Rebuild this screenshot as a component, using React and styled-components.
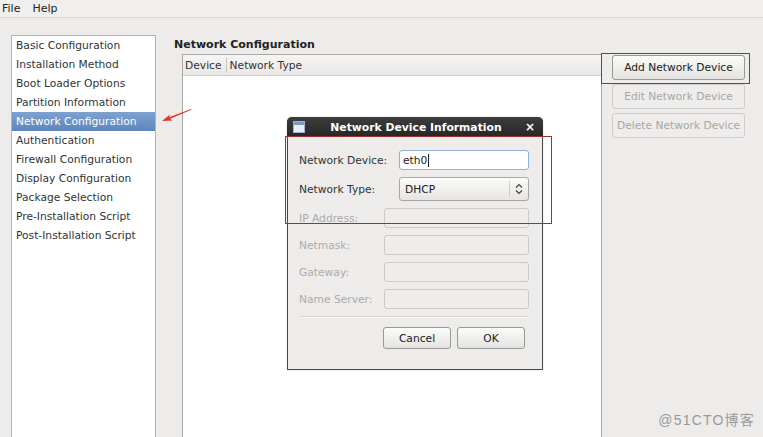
import React from "react";
import styled, { createGlobalStyle } from "styled-components";

const GlobalStyle = createGlobalStyle`
  html, body {
    margin: 0;
    padding: 0;
    background: #edeceb;
  }
  * {
    box-sizing: border-box;
  }
`;

const sections = [
  "Basic Configuration",
  "Installation Method",
  "Boot Loader Options",
  "Partition Information",
  "Network Configuration",
  "Authentication",
  "Firewall Configuration",
  "Display Configuration",
  "Package Selection",
  "Pre-Installation Script",
  "Post-Installation Script",
];

const fields = [
  { label: "IP Address:" },
  { label: "Netmask:" },
  { label: "Gateway:" },
  { label: "Name Server:" },
];

function App() {
  return (
    <>
      <GlobalStyle />
      <Window>
        <MenuBar>
          <MenuItem>File</MenuItem>
          <MenuItem>Help</MenuItem>
        </MenuBar>

        <Main>
          <SideList>
            {sections.map((s) => (
              <ListRow key={s} $active={s === "Network Configuration"}>
                {s}
              </ListRow>
            ))}
          </SideList>

          <Content>
            <Title>Network Configuration</Title>
            <TableArea>
              <Table>
                <TableHeader>
                  <HeaderCell>Device</HeaderCell>
                  <HeaderCell $last>Network Type</HeaderCell>
                </TableHeader>
              </Table>
              <ButtonColumn>
                <SideButton>Add Network Device</SideButton>
                <SideButton disabled>Edit Network Device</SideButton>
                <SideButton disabled>Delete Network Device</SideButton>
              </ButtonColumn>
            </TableArea>
          </Content>
        </Main>

        <Dialog>
          <TitleBar>
            <WindowIcon width="12" height="12" viewBox="0 0 12 12">
              <rect x="0.5" y="0.5" width="11" height="11" fill="#e8eef6" stroke="#9fb3cc" />
              <rect x="1" y="1" width="10" height="3" fill="#7b9bc6" />
            </WindowIcon>
            <DialogTitle>Network Device Information</DialogTitle>
            <CloseMark>×</CloseMark>
          </TitleBar>
          <DialogBody>
            <FormRow>
              <FieldLabel $width={100}>Network Device:</FieldLabel>
              <TextInput $focused>
                eth0<Caret />
              </TextInput>
            </FormRow>
            <FormRow>
              <FieldLabel $width={100}>Network Type:</FieldLabel>
              <SelectBox>
                <SelectValue>DHCP</SelectValue>
                <SelectArrows>
                  <svg width="8" height="12" viewBox="0 0 8 12">
                    <path d="M1 4.5 L4 1.5 L7 4.5 M1 7.5 L4 10.5 L7 7.5" fill="none" stroke="#444" strokeWidth="1.2" />
                  </svg>
                </SelectArrows>
              </SelectBox>
            </FormRow>
            {fields.map((f) => (
              <FormRow key={f.label}>
                <FieldLabel $width={85} $disabled>
                  {f.label}
                </FieldLabel>
                <TextInput $disabled />
              </FormRow>
            ))}
            <Separator />
            <DialogButtons>
              <DialogButton>Cancel</DialogButton>
              <DialogButton>OK</DialogButton>
            </DialogButtons>
          </DialogBody>
        </Dialog>

        <Highlight style={{ left: 601, top: 53, width: 149, height: 31 }} />
        <Highlight style={{ left: 285, top: 136, width: 267, height: 88 }} />

        <Arrow width="32" height="16" viewBox="0 0 32 16">
          <path d="M1 13 L9 6.5 L8.2 9.3 L30 1 L30.4 1.8 L9.2 10.8 L11.5 12.5 Z" fill="#e8322b" />
        </Arrow>

        <Watermark>@51CTO博客</Watermark>
      </Window>
    </>
  );
}

export default App;

const Window = styled.div`
  position: relative;
  width: 763px;
  height: 437px;
  overflow: hidden;
  background: #edeceb;
  font-family: "DejaVu Sans", "Noto Sans", sans-serif;
  font-size: 10.7px;
  color: #2e3436;
`;

const MenuBar = styled.div`
  display: flex;
  height: 18px;
  align-items: center;
  padding-left: 2px;
  gap: 12px;
  background: #f0efee;
  border-bottom: 1px solid #dcdad8;
`;

const MenuItem = styled.span`
  font-size: 11px;
  color: #222;
`;

const Main = styled.div`
  display: flex;
  padding: 17px 0 0 11px;
  height: 419px;
`;

const SideList = styled.div`
  width: 145px;
  height: 420px;
  background: #fff;
  border: 1px solid #b4b2b0;
`;

const ListRow = styled.div`
  height: 19px;
  line-height: 19px;
  padding-left: 4px;
  white-space: nowrap;
  color: ${(p) => (p.$active ? "#fff" : "#2e3436")};
  background: ${(p) =>
    p.$active ? "linear-gradient(#7ea2d0, #5c86bc)" : "transparent"};
`;

const Content = styled.div`
  display: flex;
  flex-direction: column;
  margin-left: 18px;
`;

const Title = styled.div`
  height: 21px;
  line-height: 18px;
  padding-top: 1px;
  font-size: 11px;
  font-weight: bold;
  color: #222;
`;

const TableArea = styled.div`
  display: flex;
  align-items: flex-start;
  padding-left: 8px;
`;

const Table = styled.div`
  width: 420px;
  height: 400px;
  background: #fff;
  border: 1px solid #a9a7a5;
`;

const TableHeader = styled.div`
  display: flex;
  height: 21px;
  align-items: center;
  background: linear-gradient(#f6f5f4, #e9e8e6);
  border-bottom: 1px solid #cfcdcb;
`;

const HeaderCell = styled.div`
  height: 15px;
  line-height: 15px;
  flex: ${(p) => (p.$last ? 1 : "none")};
  border-right: ${(p) => (p.$last ? "none" : "1px solid #c9c7c5")};
  color: #333;
  padding: 0 4px 0 ${(p) => (p.$last ? "3px" : "2px")};
`;

const ButtonColumn = styled.div`
  display: flex;
  flex-direction: column;
  gap: 4px;
  margin-left: 10px;
  margin-top: 1px;
`;

const SideButton = styled.button`
  width: 133px;
  height: 25px;
  font-family: inherit;
  font-size: 10.7px;
  border-radius: 3px;
  border: 1px solid ${(p) => (p.disabled ? "#cfcdcb" : "#9a9896")};
  background: ${(p) =>
    p.disabled ? "#eeedec" : "linear-gradient(#fbfbfa, #e4e3e1)"};
  color: ${(p) => (p.disabled ? "#a8a6a4" : "#222")};
  padding: 0;
`;

const Dialog = styled.div`
  position: absolute;
  left: 287px;
  top: 117px;
  width: 256px;
  height: 253px;
  display: flex;
  flex-direction: column;
  border: 1px solid #4a4a4a;
  border-top: none;
  border-radius: 5px 5px 0 0;
  background: #edeceb;
  box-shadow: 0 0 2px rgba(0, 0, 0, 0.2);
`;

const TitleBar = styled.div`
  display: flex;
  align-items: center;
  height: 20px;
  padding: 0 8px 0 6px;
  margin: 0 -1px;
  background: linear-gradient(#3d3d3d, #262626);
  border-radius: 5px 5px 0 0;
  color: #fff;
`;

const WindowIcon = styled.svg`
  flex: none;
`;

const DialogTitle = styled.div`
  flex: 1;
  text-align: center;
  font-weight: bold;
  font-size: 10.8px;
  padding: 1px 0 0 2px;
`;

const CloseMark = styled.div`
  font-size: 12px;
  font-weight: bold;
  line-height: 12px;
`;

const DialogBody = styled.div`
  display: flex;
  flex-direction: column;
  gap: 7px;
  padding: 13px 13px 0 11px;
`;

const FormRow = styled.div`
  display: flex;
  align-items: center;
`;

const FieldLabel = styled.div`
  width: ${(p) => p.$width}px;
  flex: none;
  color: ${(p) => (p.$disabled ? "#adabaa" : "#2e3436")};
`;

const TextInput = styled.div`
  flex: 1;
  height: 20px;
  display: flex;
  align-items: center;
  padding-left: 3px;
  border-radius: 3px;
  border: 1px solid
    ${(p) => (p.$focused ? "#8fb2dc" : p.$disabled ? "#cdcbc9" : "#a9a7a5")};
  background: ${(p) => (p.$disabled ? "#eeedec" : "#fff")};
  color: #222;
`;

const Caret = styled.span`
  width: 1px;
  height: 13px;
  background: #222;
  margin-left: 1px;
`;

const SelectBox = styled.div`
  flex: 1;
  height: 24px;
  display: flex;
  align-items: center;
  border-radius: 3px;
  border: 1px solid #a9a7a5;
  background: linear-gradient(#fbfbfa, #e6e5e3);
`;

const SelectValue = styled.div`
  flex: 1;
  padding-left: 5px;
  color: #222;
`;

const SelectArrows = styled.div`
  width: 19px;
  height: 16px;
  display: flex;
  align-items: center;
  justify-content: center;
  border-left: 1px solid #cfcdcb;
`;

const Separator = styled.div`
  height: 2px;
  border-top: 1px solid #d6d4d2;
  border-bottom: 1px solid #f8f8f7;
`;

const DialogButtons = styled.div`
  display: flex;
  justify-content: flex-end;
  gap: 6px;
  padding-right: 4px;
  margin-top: 2px;
`;

const DialogButton = styled.button`
  width: 68px;
  height: 22px;
  padding: 0;
  font-family: inherit;
  font-size: 10.7px;
  color: #222;
  border-radius: 3px;
  border: 1px solid #9a9896;
  background: linear-gradient(#fbfbfa, #e4e3e1);
`;

const Highlight = styled.div`
  position: absolute;
  border: 1px solid #a03030;
  pointer-events: none;
`;

const Arrow = styled.svg`
  position: absolute;
  left: 161px;
  top: 108px;
`;

const Watermark = styled.div`
  position: absolute;
  right: 8px;
  bottom: 8px;
  font-family: "Liberation Sans", "Noto Sans CJK SC", sans-serif;
  font-size: 14px;
  letter-spacing: 1.2px;
  color: #9a9a9a;
`;
